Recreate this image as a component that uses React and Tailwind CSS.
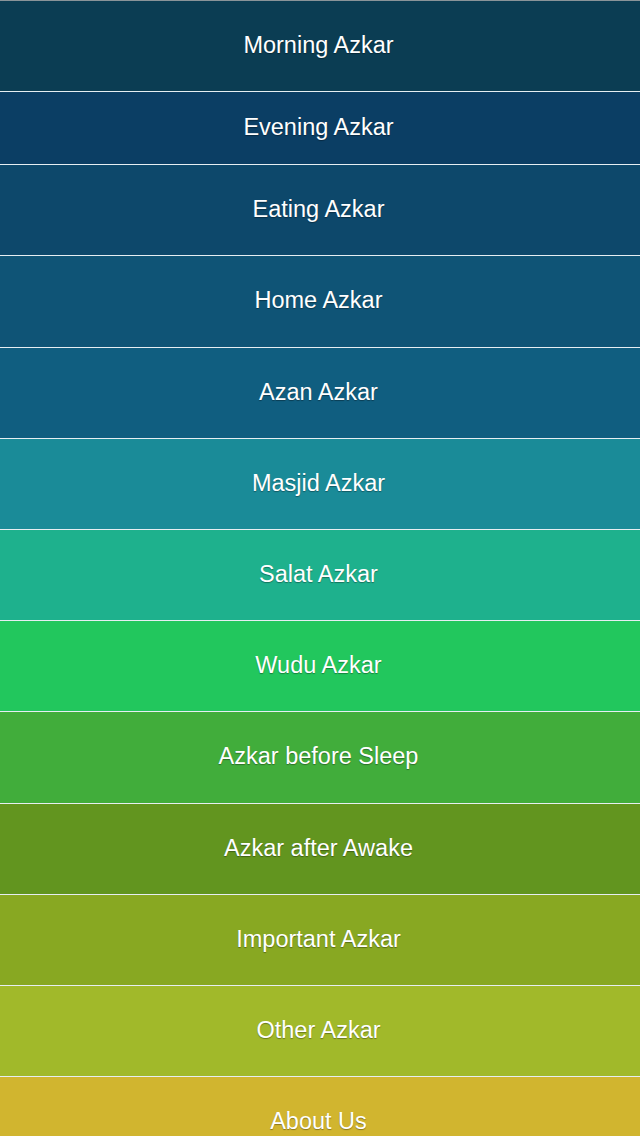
import React from "react";

const rows = [
  { label: "Morning Azkar", cls: "bg-[#0b3d53] h-[90px] border-b" },
  { label: "Evening Azkar", cls: "bg-[#0b3e64] h-[72px] border-b" },
  { label: "Eating Azkar", cls: "bg-[#0d486b] h-[90px] border-b" },
  { label: "Home Azkar", cls: "bg-[#0f5476] h-[91px] border-b" },
  { label: "Azan Azkar", cls: "bg-[#105e80] h-[90px] border-b" },
  { label: "Masjid Azkar", cls: "bg-[#1a8b98] h-[90px] border-b" },
  { label: "Salat Azkar", cls: "bg-[#1eb18d] h-[90px] border-b" },
  { label: "Wudu Azkar", cls: "bg-[#22c75d] h-[90px] border-b" },
  { label: "Azkar before Sleep", cls: "bg-[#41ad3b] h-[91px] border-b" },
  { label: "Azkar after Awake", cls: "bg-[#62951f] h-[90px] border-b" },
  { label: "Important Azkar", cls: "bg-[#88a822] h-[90px] border-b" },
  { label: "Other Azkar", cls: "bg-[#a1b92a] h-[90px] border-b" },
  { label: "About Us", cls: "bg-[#d1b52f] h-[90px]" },
];

export default function App() {
  return (
    <div className="w-[640px] h-[1136px] overflow-hidden flex flex-col border-t border-[#8a9499] bg-white font-['Liberation_Sans',Arial,sans-serif]">
      {rows.map((r) => (
        <div
          key={r.label}
          className={`${r.cls} box-content shrink-0 border-[#e6eef2] flex items-center justify-center pr-[3px] text-white text-[23.5px] leading-none [text-shadow:0_1px_1px_rgba(0,0,0,0.35)]`}
        >
          <span className="-mt-[1px]">{r.label}</span>
        </div>
      ))}
    </div>
  );
}
